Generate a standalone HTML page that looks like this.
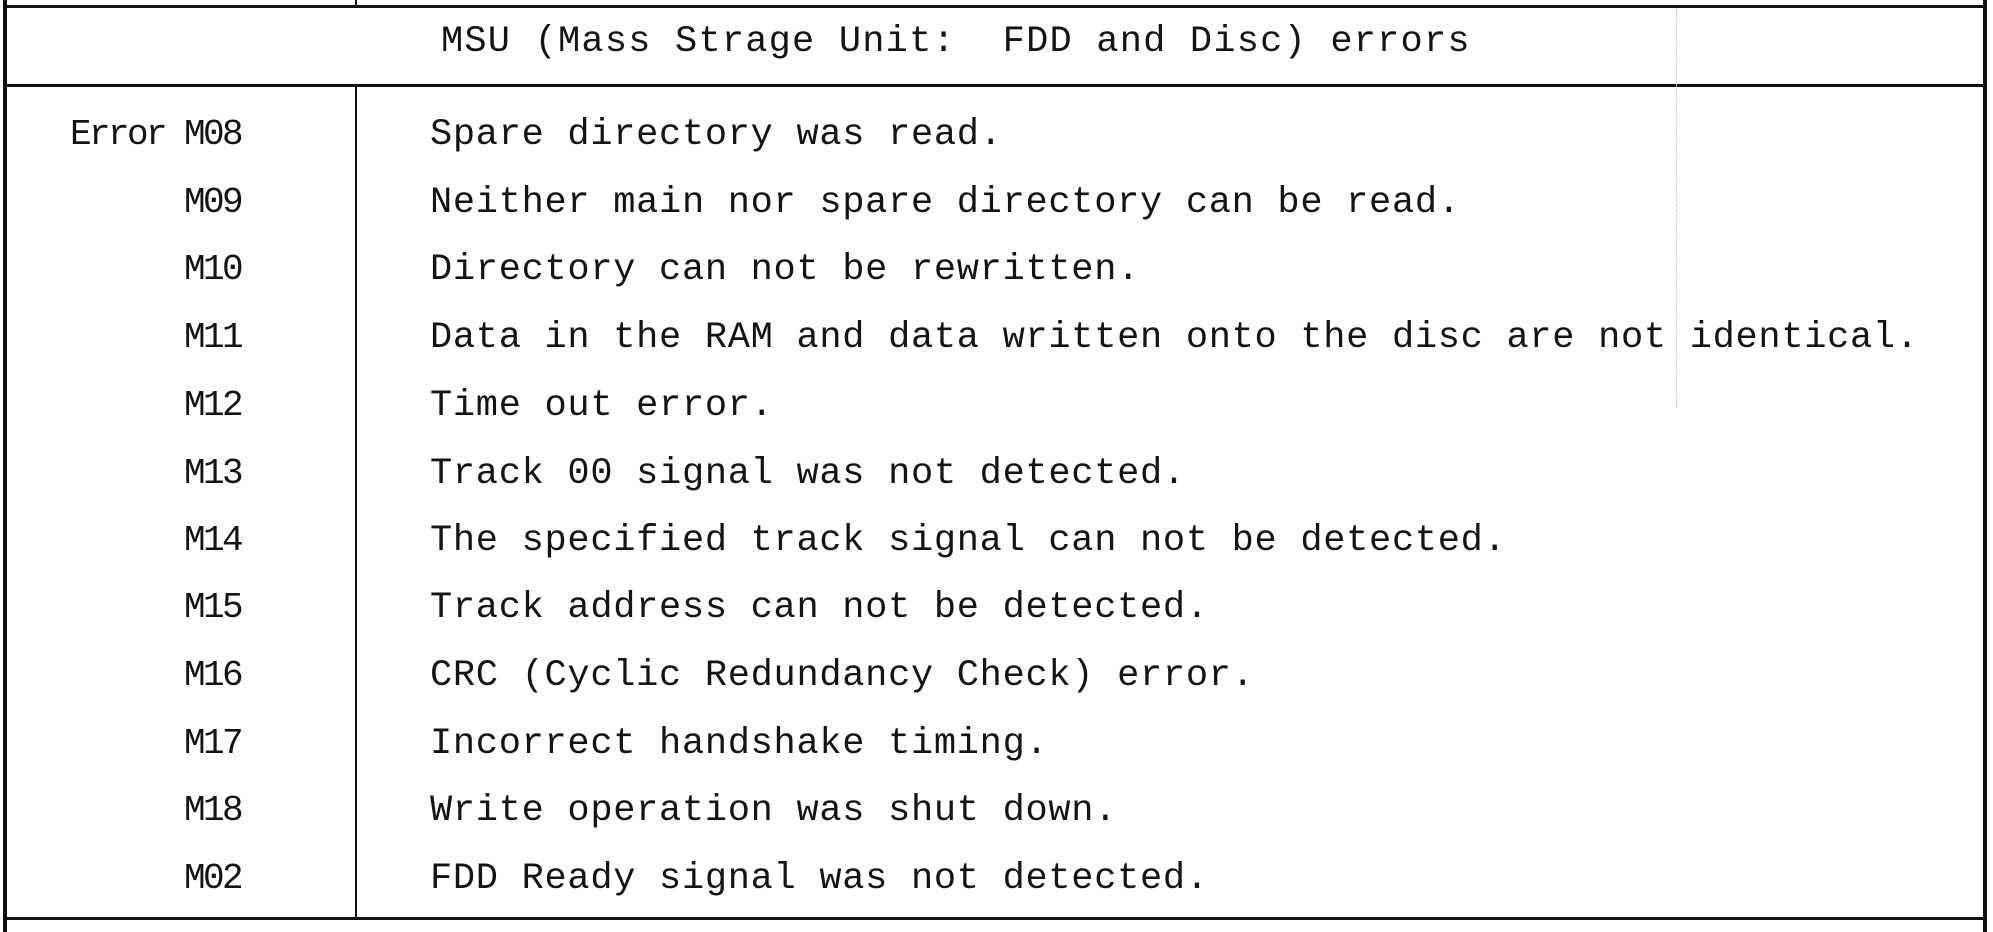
<!DOCTYPE html>
<html><head><meta charset="utf-8"><style>
html,body{margin:0;padding:0;background:#fff;}
body{width:1993px;height:932px;position:relative;overflow:hidden;font-family:"Liberation Mono",monospace;color:#141414;}
.l{position:absolute;background:#111;}
.t{position:absolute;font-size:37px;line-height:40px;white-space:pre;letter-spacing:0.7px;}
.c{right:1752px;text-align:right;font-size:36px;letter-spacing:-2.6px;}
.d{left:430px;}
</style></head><body>
<div class="l" style="left:3px;top:0;width:4px;height:932px"></div>
<div class="l" style="left:1983px;top:0;width:4px;height:932px"></div>
<div class="l" style="left:3px;top:5px;width:1984px;height:3px"></div>
<div class="l" style="left:3px;top:84px;width:1984px;height:3px"></div>
<div class="l" style="left:3px;top:917px;width:1984px;height:3px"></div>
<div class="l" style="left:355px;top:0;width:2px;height:6px"></div>
<div class="l" style="left:355px;top:86px;width:2px;height:832px"></div>
<div style="position:absolute;left:1676px;top:8px;width:0;height:400px;border-left:1px dashed #ccc"></div>
<div class="t" style="left:441px;top:22px;letter-spacing:1.2px">MSU (Mass Strage Unit:  FDD and Disc) errors</div>

<div class="t c" style="top:115px">Error M08</div>
<div class="t c" style="top:183px">M09</div>
<div class="t c" style="top:250px">M10</div>
<div class="t c" style="top:318px">M11</div>
<div class="t c" style="top:386px">M12</div>
<div class="t c" style="top:454px">M13</div>
<div class="t c" style="top:521px">M14</div>
<div class="t c" style="top:588px">M15</div>
<div class="t c" style="top:656px">M16</div>
<div class="t c" style="top:724px">M17</div>
<div class="t c" style="top:791px">M18</div>
<div class="t c" style="top:859px">M02</div>

<div class="t d" style="top:115px">Spare directory was read.</div>
<div class="t d" style="top:183px">Neither main nor spare directory can be read.</div>
<div class="t d" style="top:250px">Directory can not be rewritten.</div>
<div class="t d" style="top:318px">Data in the RAM and data written onto the disc are not identical.</div>
<div class="t d" style="top:386px">Time out error.</div>
<div class="t d" style="top:454px">Track 00 signal was not detected.</div>
<div class="t d" style="top:521px">The specified track signal can not be detected.</div>
<div class="t d" style="top:588px">Track address can not be detected.</div>
<div class="t d" style="top:656px">CRC (Cyclic Redundancy Check) error.</div>
<div class="t d" style="top:724px">Incorrect handshake timing.</div>
<div class="t d" style="top:791px">Write operation was shut down.</div>
<div class="t d" style="top:859px">FDD Ready signal was not detected.</div>
</body></html>
